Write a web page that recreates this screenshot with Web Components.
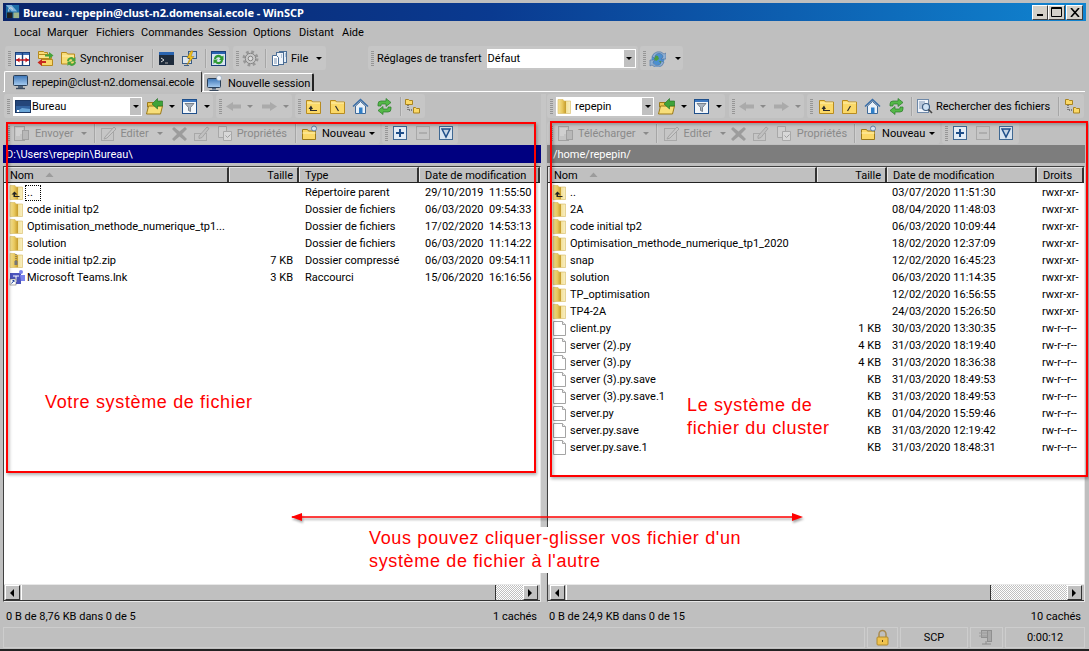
<!doctype html>
<html><head><meta charset="utf-8">
<style>
html,body{margin:0;padding:0;background:#c0c0c0;overflow:hidden}
</style></head><body>
<winscp-app></winscp-app>
<template id="app-t"><style>
:host{display:flex;flex-direction:column;width:1089px;height:651px;position:relative;overflow:hidden;background:#bfbfbf;font:11px/13px Roboto,"Noto Sans",sans-serif;color:#000;box-sizing:border-box;padding-left:3px}
.title{height:18px;margin-top:3px;background:linear-gradient(90deg,#0a246a 0%,#0a3a90 45%,#1084d0 100%);display:flex;align-items:center;color:#fff;margin-right:3px;padding-left:2px}
.title b{margin-left:2px;font:700 11px/13px "Noto Sans",sans-serif;white-space:nowrap;flex:1;letter-spacing:-.05px}
.wb{width:16px;height:15px;background:#d4d0c8;border:1px solid;border-color:#fff #404040 #404040 #fff;box-sizing:border-box;display:flex;align-items:center;justify-content:center}
.wbs{display:flex;margin-right:3px}
.menu{height:23px;display:flex;align-items:center;padding-left:11px}
.menu span{white-space:nowrap;flex:none}
.tb1{height:27px;box-sizing:border-box;display:flex;align-items:flex-start;padding-top:2px}
.tabs{height:21px;display:flex;align-items:flex-end;border-bottom:1px solid #fff;box-sizing:border-box;margin-right:4px}
.tab{display:flex;align-items:center;box-sizing:border-box;background:#c0c0c0;white-space:nowrap}
.tab.a{height:21px;width:198px;gap:3px;border-top:1px solid #fff;border-left:1px solid #fff;border-right:1px solid #333;padding-left:7px;margin-left:1px;margin-bottom:-1px;border-radius:2px 2px 0 0;position:relative;letter-spacing:-.12px}
.tab.i{height:18px;width:111px;gap:5px;border-top:1px solid #fff;border-right:2px solid #222;border-left:1px solid #fff;padding:2px 0 0 2px;margin-left:1px;border-radius:2px 2px 0 0;letter-spacing:-.05px}
.panes{flex:1;display:flex;min-height:0}
.split{width:6px;flex:none;box-sizing:border-box;padding:2px 1px 0 0}
.split i{display:block;height:100%;background:#c6c6c6}
.stat1{height:25px;display:flex;box-sizing:border-box;padding-top:3px}
.stat1 div{display:flex;justify-content:space-between;align-items:center;box-sizing:border-box;white-space:nowrap}
.stat2{height:21px;display:flex;margin-right:4px;gap:2px;margin-bottom:3px}
.stat2 div{border:1px solid #cdcdcd;box-sizing:border-box;display:flex;align-items:center;justify-content:center}
.bottom{position:absolute;left:0;right:0;bottom:0;height:2px;background:#222}
</style>
<div class="title"><win-ic name="app" size="16"></win-ic><b>Bureau - repepin@clust-n2.domensai.ecole - WinSCP</b>
<div class="wbs"><div class="wb"><svg width="8" height="8"><path d="M1 6h6v2H1z" fill="#000"/></svg></div><div class="wb" style="width:17px"><svg width="11" height="10"><path d="M0.500 0.500h10v9h-10zM0.500 1.500h10" fill="none" stroke="#000"/></svg></div><div class="wb" style="margin-left:1px;width:17px"><svg width="10" height="9"><path d="M1 0l8 9M9 0l-8 9" stroke="#000" stroke-width="1.600"/></svg></div></div></div>
<div class="menu"><span style="width:33px">Local</span><span style="width:49px">Marquer</span><span style="width:45px">Fichiers</span><span style="width:67px">Commandes</span><span style="width:45px">Session</span><span style="width:46px">Options</span><span style="width:43px">Distant</span><span>Aide</span></div>
<div class="tb1">
<win-band style="margin-left:2px;width:224px"><win-ic name="compare"></win-ic><win-ic name="foldsync" style="margin-left:6px"></win-ic><win-ic name="foldsync2" style="margin-left:6px"></win-ic><span style="margin-left:3px">Synchroniser</span><win-sep style="margin-left:8px"></win-sep><win-ic name="term" style="margin-left:4px"></win-ic><win-ic name="bolt" style="margin-left:6px"></win-ic><win-sep style="margin-left:7px"></win-sep><win-ic name="refreshbox" style="margin-left:3px"></win-ic></win-band>
<win-band style="margin-left:4px;width:93px"><win-ic name="gear"></win-ic><win-sep style="margin-left:6px"></win-sep><win-ic name="props" style="margin-left:4px"></win-ic><span style="margin-left:3px">File</span><win-caret style="margin-left:8px"></win-caret></win-band>
<win-band style="margin-left:42px;width:270px"><span>Réglages de transfert</span><win-combo style="width:149px;margin-left:5px" text="Défaut"></win-combo></win-band>
<win-band style="margin-left:2px;width:43px"><win-ic name="globe"></win-ic><win-caret style="margin-left:9px"></win-caret></win-band>
</div>
<div class="tabs"><div class="tab a"><win-ic name="monitor"></win-ic><span>repepin@clust-n2.domensai.ecole</span></div><div class="tab i"><win-ic name="monitor2"></win-ic><span>Nouvelle session</span></div></div>
<div class="panes">
<win-pane id="L" style="width:538px"></win-pane>
<div class="split"><i></i></div>
<win-pane id="R" style="width:538px"></win-pane>
</div>
<div class="stat1"><div style="width:538px;padding:0 4px 0 3px">0 B de 8,76 KB dans 0 de 5<span>1 cachés</span></div><div style="width:538px;padding:0 4px 0 2px;margin-left:6px">0 B de 24,9 KB dans 0 de 15<span>10 cachés</span></div></div>
<div class="stat2"><div style="flex:1"></div><div style="width:31px"><win-ic name="lock"></win-ic></div><div style="width:68px">SCP</div><div style="width:33px"><win-ic name="net"></win-ic></div><div style="width:80px">0:00:12</div></div>
<div class="bottom"></div>
<win-note style="left:6px;top:122px;width:530px;height:351px"></win-note>
<win-note style="left:550px;top:121px;width:538px;height:356px"></win-note>
<win-label style="left:45px;top:391px">Votre système de fichier</win-label>
<win-label style="left:687px;top:394px;width:170px">Le système de fichier du cluster</win-label>
<win-label style="left:369px;top:527px;width:385px;height:46px;background:#fff">Vous pouvez cliquer-glisser vos fichier d'un système de fichier à l'autre</win-label>
<svg style="position:absolute;left:286px;top:510px;filter:drop-shadow(1px 2px 1px rgba(0,0,0,.35))" width="522" height="16"><path d="M6 7H512" stroke="#f00" stroke-width="1.400"/><path d="M5 7l11-4v8zM517 7l-11-4v8z" fill="#f00"/></svg>
</template>

<template id="pane-t"><style>
:host{display:flex;flex-direction:column;flex:none;box-sizing:border-box;min-width:0}
.tb{height:24px;display:flex;align-items:center;margin-top:2px}
.tb2{height:22px;display:flex;align-items:center;margin-top:4px;color:#8a8a8a}
.path{height:18px;margin-top:1px;display:flex;align-items:center;color:#fff;box-sizing:border-box;white-space:nowrap;flex:none;padding-top:1px}
.list{flex:1;min-height:0;margin-top:3px;display:flex;flex-direction:column;background:#fff;border:1px solid;border-color:#404040 #e8e8e8 #e8e8e8 #404040;position:relative;overflow:hidden}
.hdr{height:16px;flex:none;display:flex;background:#c0c0c0;border-bottom:1px solid #222;box-sizing:border-box}
.hdr span{box-sizing:border-box;border-top:1px solid #e6e6e6;border-left:1px solid #e6e6e6;border-right:2px solid #333;padding:0 5px;white-space:nowrap;overflow:hidden;flex:none;line-height:15px}
.hdr .r{text-align:right;padding-right:4px}
.rows{flex:1;min-height:0;overflow:hidden;padding-top:1px}
.sb{height:17px;flex:none;display:flex;background:#c0c0c0;border-top:1px solid #e8e8e8;border-bottom:1px solid #333;box-sizing:border-box}
.btn{width:15px;height:15px;flex:none;box-sizing:border-box;border:1px solid;border-color:#fff #333 #333 #fff;display:flex;align-items:center;justify-content:center;background:#c0c0c0}
.thumb{box-sizing:border-box;border-right:1px solid #333;border-left:1px solid #fff;flex:none}
.track{flex:1;background:repeating-conic-gradient(#fff 0 25%,#c0c0c0 0 50%) 0 0/2px 2px}
</style>
<div class="tb" id="tb"></div>
<div class="tb2" id="tb2"></div>
<div class="path" id="path"></div>
<div class="list"><div class="hdr" id="hdr"></div><div class="rows" id="rows"></div>
<div class="sb" id="sb"></div></div>
</template>

<script>
const FG=`<defs><linearGradient id="fg"><stop offset="0" stop-color="#f6e496"/><stop offset=".35" stop-color="#e8c75c"/><stop offset=".62" stop-color="#c79e2e"/><stop offset=".68" stop-color="#f3e29c"/><stop offset="1" stop-color="#f9efc4"/></linearGradient></defs><path d="M1 1.500h5L7 3h6.500v12.500H1z" fill="url(#fg)" stroke="#d6bb62" stroke-width=".6"/>`;
const ICONS={
app:`<rect x="1" y="1" width="14" height="14" fill="#1d6ea8"/><path d="M1 1h6l6 7H7z" fill="#7fb4dc"/><path d="M2 9h6v6H2z" fill="#222"/><path d="M9 9h6v6H9z" fill="#9db58a"/><path d="M4 8v-2a2 2 0 0 1 4 0" fill="none" stroke="#ddd"/>`,
compare:`<rect x="1.500" y="2.500" width="14" height="13" fill="#fff" stroke="#1a3f7a"/><rect x="2" y="3" width="13" height="2" fill="#3f70b4"/><path d="M8.500 3v12" stroke="#1a3f7a" stroke-width="1.400"/><path d="M2 10h13" stroke="#c0141c" stroke-width="1.500"/><path d="M5.500 7.500L2.500 10l3 2.500zM11.500 7.500l3 2.500-3 2.500z" fill="#c0141c"/>`,
foldsync:`<path d="M1.500 1.500h5l1 1h3v4h-9z" fill="#f8dc76" stroke="#b68a1e"/><path d="M1.500 4.500h13v4h-13z" fill="#fce489" stroke="#b68a1e"/><path d="M4.500 9.500h11v6h-11z" fill="#f8d76c" stroke="#b68a1e"/><path d="M8 4.500h4V2l4.500 3.500L12 9V6.500H8z" fill="#46a33d"/><path d="M9 11H5V9l-4.500 3.500L5 16v-3h4z" fill="#c8281e"/>`,
foldsync2:`<path d="M1.500 2.500h5l1 1.500h7v10h-13z" fill="#f8dc76" stroke="#b68a1e"/><path d="M2 6h12" stroke="#fff1b0"/><path d="M7 11a4 4 0 0 1 7-2.500l1.500-1.500v4.500H11l1.500-1.500A2 2 0 0 0 9 11z" fill="#46a33d"/><path d="M16 12a4 4 0 0 1-7 2.500L7.500 16v-4.500H12L10.500 13a2 2 0 0 0 3.500-1z" fill="#46a33d"/>`,
term:`<rect x="1" y="2" width="15" height="13" fill="#1e2b3c"/><rect x="1" y="2" width="15" height="3" fill="#2a64b0"/><path d="M3 8l3 2-3 2" fill="none" stroke="#ddd"/><path d="M7 13h3" stroke="#aaa"/>`,
bolt:`<rect x="1.500" y="6.500" width="9" height="7" fill="#dde6ef" stroke="#3a5c86"/><rect x="7.500" y="1.500" width="8" height="7" fill="#bcd0e6" stroke="#3a5c86"/><path d="M10 1L6 8h3l-3 7 7-8.500h-3l2-5.500z" fill="#f2c21c" stroke="#a8780c" stroke-width=".5"/><path d="M3 15.500h5" stroke="#3a5c86"/>`,
refreshbox:`<rect x="1.500" y="1.500" width="14" height="14" fill="#d8e4f2" stroke="#1a3f7a"/><rect x="2" y="2" width="13" height="2" fill="#2a64b0"/><path d="M4 9a4.500 4.500 0 0 1 8-2.500l1.500-1V10H9l1.500-1.500A2.500 2.500 0 0 0 6 9z" fill="#2f9a33"/><path d="M13 10a4.500 4.500 0 0 1-8 2.500L3.500 14V9.500H8L6.500 11a2.500 2.500 0 0 0 4.500-1z" fill="#2f9a33"/>`,
gear:`<circle cx="8.500" cy="8.500" r="6.500" fill="none" stroke="#989898" stroke-width="3" stroke-dasharray="2.600 2.500"/><circle cx="8.500" cy="8.500" r="5.200" fill="#c8c8c8" stroke="#868686"/><circle cx="8.500" cy="8.500" r="2.300" fill="#dcdcdc" stroke="#868686"/>`,
props:`<rect x="8.500" y="1.500" width="7" height="11" fill="#e4edf7" stroke="#4b6e96"/><rect x="5.500" y="2.500" width="7" height="12" fill="#eef3f9" stroke="#4b6e96"/><path d="M1.500 5.500h4l2 2v8h-6z" fill="#fff" stroke="#4b6e96"/><path d="M3 9h3M3 11h3M3 13h3M10 5h1M10 7h1M14 4h1M14 6h1" stroke="#7a94b4"/>`,
globe:`<circle cx="9" cy="9" r="6.500" fill="#4c8fd0"/><path d="M5 5l4 1 1 3-3 2-2-2zM10 11l3 0-1 3z" fill="#4d9e3f"/><path d="M3 7a7 7 0 0 1 12-3l2-1v6h-5l2-2a4 4 0 0 0-8 1z" fill="#8fb0d4" stroke="#4a6f9c" stroke-width=".6"/><path d="M15 12a7 7 0 0 1-12 3l-2 1v-6h5l-2 2a4 4 0 0 0 8-1z" fill="#8fb0d4" stroke="#4a6f9c" stroke-width=".6"/>`,
monitor:`<defs><linearGradient id="m" x2="0" y2="1"><stop offset="0" stop-color="#3c76b8"/><stop offset="1" stop-color="#a9cdf0"/></linearGradient></defs><rect x="1.500" y="1.500" width="14" height="10" rx="1" fill="url(#m)" stroke="#2a3f58"/><path d="M6 12h5v2H6z" fill="#50657e"/><path d="M4 14.500h9" stroke="#3a4a5e" stroke-width="1.400"/>`,
monitor2:`<defs><linearGradient id="m2" x2="0" y2="1"><stop offset="0" stop-color="#3c76b8"/><stop offset="1" stop-color="#a9cdf0"/></linearGradient></defs><rect x="1.500" y="3.500" width="13" height="9" rx="1" fill="url(#m2)" stroke="#2a3f58"/><path d="M6 13h4v1.500H6z" fill="#50657e"/><path d="M3.500 15.500h9" stroke="#3a4a5e"/><circle cx="13" cy="3" r="2.500" fill="#f4f6fa" stroke="#8aa2be" stroke-width=".6"/>`,
desk:`<rect x="1.500" y="2.500" width="15" height="12" fill="#33639f" stroke="#1b3763"/><rect x="2" y="3" width="14" height="5" fill="#24467a"/><path d="M2 14l6-4 8 1v3z" fill="#6aa6d8"/><path d="M3 12h2v2H3z" fill="#fff"/>`,
foldopen:`<path d="M1.500 4.500h6l1 1.500h5v3h-12z" fill="#e9c650" stroke="#9b7a1a"/><path d="M.5 16l2-8h14l-2 8z" fill="#f7de7a" stroke="#9b7a1a"/><path d="M6 6l5.500-5.500v2.500h5v5h-5V11z" fill="#3fa33a" stroke="#1f6d1f" stroke-width=".6"/>`,
filter:`<rect x="1.500" y="1.500" width="14" height="14" fill="#f2f6fa" stroke="#1f4f8a"/><rect x="2" y="2" width="13" height="2" fill="#3d78c0"/><path d="M4 5.500h9L9.500 9.500v4l-2-1V9.500z" fill="#a9b4c0" stroke="#56606c" stroke-width=".7"/>`,
up:`<path d="M1.500 2.500h5l1 1.500h8v11.500H1.500z" fill="#fbd968" stroke="#b88c20"/><path d="M2 5h13" stroke="#fff1b0"/><path d="M6 7.500L3.500 11H5v2h7v-1H6.500v-1H8z" fill="#2c2c2c"/>`,
root:`<path d="M1.500 2.500h5l1 1.500h8v11.500H1.500z" fill="#fbd968" stroke="#b88c20"/><path d="M2 5h13" stroke="#fff1b0"/><path d="M6.500 8l3 5" stroke="#2c2c2c" stroke-width="1.200"/>`,
rootd:`<path d="M1.500 2.500h5l1 1.500h8v11.500H1.500z" fill="#fbd968" stroke="#b88c20"/><path d="M2 5h13" stroke="#fff1b0"/><path d="M9.500 8l-3 5" stroke="#2c2c2c" stroke-width="1.200"/>`,
home:`<path d="M1 8.500L8.500 1.500 16 8.500" fill="none" stroke="#3a6ea8" stroke-width="1.600"/><path d="M3.500 8L8.500 3.500 13.500 8v7.500h-10z" fill="#eaf1f8" stroke="#3f6a99"/><rect x="7" y="9.500" width="3.500" height="6" fill="#2f7fc8"/>`,
refresh:`<path d="M2 8V6q0-3 3-3h5V.5l5 4-5 4V6H6q-1 0-1 1v1z" fill="#54b848" stroke="#2a7a2a" stroke-width=".7"/><path d="M15 9v2q0 3-3 3H7v2.500l-5-4 5-4V11h4q1 0 1-1V9z" fill="#54b848" stroke="#2a7a2a" stroke-width=".7"/>`,
tree:`<path d="M1.500 1.500h3l1 1h3v4h-7z" fill="#fbd968" stroke="#a98420"/><path d="M9.500 9.500h2l1 1h3v4.500h-6z" fill="#fbd968" stroke="#a98420"/><path d="M4 7v5h5" fill="none" stroke="#333" stroke-dasharray="1 1"/>`,
find:`<rect x="1.500" y="1.500" width="11" height="13" fill="#f0f4fa" stroke="#6d88a8"/><path d="M3 4h6M3 6h4M3 8h4M3 10h4" stroke="#7a94b4"/><circle cx="10" cy="9" r="3.500" fill="#cfe2f4" stroke="#3f5e82" stroke-width="1.200"/><path d="M12.500 11.500L16 15" stroke="#444" stroke-width="1.600"/>`,
back:`<path d="M1 8.500l7-4.500v2.500h8v4H8V13z" fill="#aaa"/>`,
fwd:`<path d="M16 8.500L9 4v2.500H1v4h8V13z" fill="#aaa"/>`,
send:`<rect x="1.500" y="1.500" width="10" height="14" fill="#c4c4c4" stroke="#a0a0a0"/><path d="M3 4h7M3 6h7M3 8h7M3 10h4" stroke="#dcdcdc"/><rect x="9.500" y="5.500" width="6" height="9" fill="#b8b8b8" stroke="#a0a0a0"/>`,
edit:`<rect x="1.500" y="3.500" width="12" height="12" fill="none" stroke="#a8a8a8"/><path d="M5 12l9-10 2 2-9 9-3 1z" fill="#c8c8c8" stroke="#a4a4a4"/>`,
del:`<path d="M3 2l5.500 4.500L14 2l2 2-5 5 5 5-2 2-5.500-4.500L3 16l-2-2 5-5-5-5z" fill="#9c9c9c"/>`,
rename:`<rect x="1.500" y="8.500" width="12" height="7" fill="none" stroke="#a8a8a8"/><path d="M6 11l8-9 2 1.500-7 9-3 1z" fill="#c0c0c0" stroke="#a4a4a4"/>`,
prop:`<path d="M1.500 1.500h8v11h-8z" fill="#cfcfcf" stroke="#a8a8a8"/><path d="M6.500 6.500h8v9h-8z" fill="#d8d8d8" stroke="#a8a8a8"/><path d="M8.500 10.500l2 2 3-3" fill="none" stroke="#a0a0a0"/>`,
newf:`<path d="M1.500 4.500h5l1 1.500h7v8.500h-13z" fill="#fbd968" stroke="#9b7a1a"/><path d="M1.500 8h13" stroke="#fff1b0"/><circle cx="13" cy="3.500" r="2.500" fill="#dbe6f2" stroke="#5f7fa6"/>`,
plus:`<rect x="1.500" y="1.500" width="13" height="13" fill="#e4edf6" stroke="#3f6892"/><path d="M4 8h8M8 4v8" stroke="#1f4f8a" stroke-width="2"/>`,
minus:`<rect x="1.500" y="1.500" width="13" height="13" fill="none" stroke="#a8a8a8"/><path d="M4 8h8" stroke="#a4a4a4" stroke-width="1.500"/>`,
inv:`<rect x="1.500" y="1.500" width="13" height="13" fill="#d8e4f0" stroke="#3f6892"/><path d="M4 4h8L8 12z" fill="#c4d4e4" stroke="#1f4f8a" stroke-width="1.500"/>`,
folder:FG,
parent:FG+`<path d="M5.500 7.500L2.500 10.500h2V13h6v-1H6v-1.500h2.500z" fill="#222"/>`,
zip:FG+`<path d="M7 2v7" stroke="#555" stroke-dasharray="1 1"/><rect x="5.500" y="9" width="3" height="4" fill="#777"/>`,
teams:`<rect x="1" y="4" width="11" height="11" fill="#4b53bc"/><path d="M4 7h6M7 7v6" stroke="#fff"/><circle cx="12" cy="3" r="2" fill="#7b83eb"/><path d="M11 6h5v6h-4z" fill="#7b83eb"/><rect x="1" y="10" width="6" height="6" fill="#fff" stroke="#555" stroke-width=".5"/><path d="M2.500 14.500l2.500-3M3.500 11.500H5V13" stroke="#1a3f9a" fill="none"/>`,
file:`<path d="M1.500 1.500h9l3 3v11h-12z" fill="#fff" stroke="#a4a4a4"/><path d="M10.500 1.500v3h3" fill="#eee" stroke="#a4a4a4"/>`,
lock:`<path d="M5 8V5a3.500 3.500 0 0 1 7 0v3" fill="none" stroke="#a88b52" stroke-width="1.500"/><rect x="3" y="8" width="11" height="8" rx="1" fill="#efc24e" stroke="#b08a2c"/><rect x="8" y="11" width="1" height="2" fill="#5a4410"/>`,
net:`<rect x="3.500" y="1.500" width="8" height="7" fill="#b0b0b0" stroke="#909090"/><rect x="9.500" y="1.500" width="4" height="11" fill="#a8a8a8" stroke="#909090"/><path d="M1 4h8M1 7h8" stroke="#9c9c9c"/><path d="M8 12v3M4 15h9" stroke="#8c8c8c"/>`
};
class Base extends HTMLElement{shadow(html){const s=this.attachShadow({mode:'open'});s.innerHTML=html;return s}}
customElements.define('win-ic',class extends Base{connectedCallback(){if(this.shadowRoot)return;const n=this.getAttribute('name'),z=this.getAttribute('size')||17;
 this.shadow(`<style>:host{display:inline-flex;flex:none;width:${z}px;height:${z}px}svg{display:block}</style><svg width="${z}" height="${z}" viewBox="0 0 17 17">${ICONS[n]||''}</svg>`)}});
customElements.define('win-band',class extends Base{connectedCallback(){if(this.shadowRoot)return;
 this.shadow(`<style>:host{display:flex;flex:none;align-items:center;height:100%;min-height:22px;max-height:24px;box-sizing:border-box;background:#c6c6c6;border-radius:3px;padding-left:3px;white-space:nowrap}
 .g{width:3px;height:15px;flex:none;margin-right:3px;background:repeating-linear-gradient(#969696 0 1px,transparent 1px 2px)}</style><div class="g"></div><slot></slot>`)}});
customElements.define('win-sep',class extends Base{connectedCallback(){if(this.shadowRoot)return;
 this.shadow(`<style>:host{display:block;flex:none;width:1px;height:19px;background:#a6a6a6;border-right:1px solid #cfcfcf}</style>`)}});
customElements.define('win-caret',class extends Base{connectedCallback(){if(this.shadowRoot)return;
 const c=this.getAttribute('color')||'#000';
 this.shadow(`<style>:host{display:block;flex:none;width:0;height:0;border:3px solid transparent;border-top:3px solid ${c};border-bottom:0}</style>`)}});
customElements.define('win-combo',class extends Base{connectedCallback(){if(this.shadowRoot)return;
 const t=this.getAttribute('text'),ic=this.getAttribute('icon');
 this.shadow(`<style>:host{display:flex;flex:none;height:19px;box-sizing:border-box;background:#fff;align-items:center;white-space:nowrap;color:#000}
 .t{flex:1;padding-left:1px;display:flex;align-items:center;gap:1px;min-width:0}.b{width:11px;height:17px;margin-right:1px;background:#c0c0c0;display:flex;align-items:center;justify-content:center}
 .c{width:0;height:0;border:3px solid transparent;border-top:3px solid #000;border-bottom:0}</style><div class="t">${ic?`<win-ic name="${ic}"></win-ic>`:''}<span>${t}</span></div><div class="b"><div class="c"></div></div>`)}});
customElements.define('win-note',class extends Base{connectedCallback(){if(this.shadowRoot)return;
 this.shadow(`<style>:host{position:absolute;box-sizing:border-box;border:2px solid #f00;box-shadow:1px 2px 3px rgba(0,0,0,.3),inset 2px 2px 3px rgba(0,0,0,.22)}</style>`)}});
customElements.define('win-label',class extends Base{connectedCallback(){if(this.shadowRoot)return;
 this.shadow(`<style>:host{position:absolute;display:block;color:#f00;font:18px/22.500px "Liberation Sans",Arial,sans-serif;letter-spacing:.65px}</style><slot></slot>`)}});

const I=(n,m)=>`<win-ic name="${n}"${m?` style="margin-left:${m}px"`:''}></win-ic>`;
const GC=m=>`<win-caret color="#8a8a8a" style="margin-left:${m}px"></win-caret>`;
const BC=m=>`<win-caret style="margin-left:${m}px"></win-caret>`;
const S=m=>`<win-sep style="margin-left:${m}px"></win-sep>`;
const T=(t,m,x='')=>`<span style="margin-left:${m}px;${x}">${t}</span>`;
const LEFT=[['parent','..','','Répertoire parent','29/10/2019  11:55:50',1],['folder','code initial tp2','','Dossier de fichiers','06/03/2020  09:54:33'],['folder','Optimisation_methode_numerique_tp1...','','Dossier de fichiers','17/02/2020  14:53:13'],['folder','solution','','Dossier de fichiers','06/03/2020  11:14:22'],['zip','code initial tp2.zip','7 KB','Dossier compressé','06/03/2020  09:54:11'],['teams','Microsoft Teams.lnk','3 KB','Raccourci','15/06/2020  16:16:56']];
const D='rwxr-xr-',F='rw-r--r--';
const RIGHT=[['parent','..','','03/07/2020 11:51:30',D],['folder','2A','','08/04/2020 11:48:03',D],['folder','code initial tp2','','06/03/2020 10:09:44',D],['folder','Optimisation_methode_numerique_tp1_2020','','18/02/2020 12:37:09',D],['folder','snap','','12/02/2020 16:45:23',D],['folder','solution','','06/03/2020 11:14:35',D],['folder','TP_optimisation','','12/02/2020 16:56:55',D],['folder','TP4-2A','','24/03/2020 15:26:50',D],['file','client.py','1 KB','30/03/2020 13:30:35',F],['file','server (2).py','4 KB','31/03/2020 18:19:40',F],['file','server (3).py','4 KB','31/03/2020 18:36:38',F],['file','server (3).py.save','KB','31/03/2020 18:49:53',F],['file','server (3).py.save.1','KB','31/03/2020 18:49:53',F],['file','server.py','KB','01/04/2020 15:59:46',F],['file','server.py.save','KB','31/03/2020 12:19:42',F],['file','server.py.save.1','KB','31/03/2020 18:48:31',F]];
customElements.define('win-row',class extends Base{connectedCallback(){if(this.shadowRoot)return;
 const cols=JSON.parse(this.dataset.cols),w=JSON.parse(this.dataset.w),ic=this.dataset.ic,foc=this.dataset.focus,pl=this.dataset.pl,ni=this.dataset.ni;
 this.shadow(`<style>:host{display:flex;height:17px;align-items:center;white-space:pre}
 .c{flex:none;box-sizing:border-box;overflow:hidden;padding:0 0 0 ${pl}px}.r{text-align:right;padding:0 6px 0 0}.n{display:flex;align-items:center;padding:0 0 0 ${ni}px;gap:1px;overflow:visible}
 .f{outline:1px dotted #000;outline-offset:-1px;padding:0 2px;width:12px;margin-left:-2px;line-height:16px}</style>`+
 cols.map((t,i)=>i==0?`<div class="c n" style="width:${w[0]}px"><win-ic name="${ic}"></win-ic><span class="${foc?'f':''}">${t}</span></div>`:`<div class="c ${i==1?'r':''}" style="width:${w[i]}px">${t}</div>`).join(''))}});
customElements.define('win-pane',class extends Base{connectedCallback(){if(this.shadowRoot)return;
 const s=this.attachShadow({mode:'open'});s.appendChild(document.getElementById('pane-t').content.cloneNode(true));
 const L=this.id=='L',$=i=>s.getElementById(i);
 $('tb').innerHTML=L?
 `<win-band style="margin-left:1px;width:209px"><win-combo style="width:129px" icon="desk" text="Bureau"></win-combo>${I('foldopen',4)}${BC(6)}${I('filter',6)}${BC(6)}</win-band>
 <win-band style="margin-left:3px;width:76px">${I('back')}${GC(5)}${I('fwd',8)}${GC(5)}</win-band>
 <win-band style="margin-left:3px;width:130px">${I('up',1)}${I('root',7)}${I('home',6)}${I('refresh',7)}${S(7)}${I('tree',2)}</win-band>`:
 `<win-band style="width:178px"><win-combo style="width:98px" icon="folder" text="repepin"></win-combo>${I('foldopen',4)}${BC(6)}${I('filter',6)}${BC(6)}</win-band>
 <win-band style="margin-left:4px;width:75px">${I('back')}${GC(5)}${I('fwd',7)}${GC(5)}</win-band>
 <win-band style="margin-left:3px;width:277px">${I('up',2)}${I('rootd',6)}${I('home',6)}${I('refresh',7)}${S(6)}${I('find',3)}${T('Rechercher des fichiers',3,'color:#000')}${S(8)}${I('tree',4)}</win-band>`;
 $('tb2').innerHTML=L?
 `<win-band style="margin-left:1px;width:376px">${I('send')}${T('Envoyer',5)}${GC(8)}${S(7)}${I('edit',4)}${T('Editer',3)}${GC(8)}${I('del',8)}${I('rename',5)}${I('prop',7)}${T('Propriétés',3)}${S(8)}${I('newf',4)}${T('Nouveau',4,'color:#000')}${BC(4)}</win-band><win-band style="margin-left:2px;width:76px">${I('plus',1)}${I('minus',6)}${I('inv',6)}</win-band>`:
 `<win-band style="width:393px">${I('send',1)}${T('Télécharger',4)}${GC(7)}${S(7)}${I('edit',5)}${T('Editer',4)}${GC(8)}${I('del',4)}${I('rename',5)}${I('prop',7)}${T('Propriétés',4)}${S(7)}${I('newf',4)}${T('Nouveau',5,'color:#000')}${BC(4)}</win-band><win-band style="margin-left:2px;width:77px">${I('plus',1)}${I('minus',6)}${I('inv',6)}</win-band>`;
 const p=$('path');p.textContent=L?'D:\\Users\\repepin\\Bureau\\':'/home/repepin/';p.style.background=L?'#000080':'#7d7d7d';p.style.paddingLeft=L?'3px':'6px';
 const hd=L?[['Nom',225],['Taille',70,1],['Type',120],['Date de modification',121]]:[['Nom',269],['Taille',70,1],['Date de modification',150],['Droits',47]];
 $('hdr').innerHTML=hd.map((h,i)=>`<span class="${h[2]?'r':''}" style="width:${h[1]}px">${h[0]}${i==0?'<svg width="9" height="5" style="margin-left:11px;vertical-align:2px"><path d="M0.500 5L4.500 .5 8.500 5z" fill="#9c9c9c"/></svg>':''}</span>`).join('');
 const w=hd.map(h=>h[1]);
 (L?LEFT:RIGHT).forEach(r=>{const e=document.createElement('win-row');
  e.dataset.cols=JSON.stringify(r.slice(1,5));e.dataset.w=JSON.stringify(w);e.dataset.ic=r[0];e.dataset.pl=L?6:5;e.dataset.ni=L?5:4;if(L&&r[5])e.dataset.focus=1;$('rows').appendChild(e)});
 $('sb').innerHTML=`<div class="btn" style="margin-left:${L?1:2}px"><svg width="5" height="8"><path d="M4 0v8L0 4z"/></svg></div><div class="thumb" style="width:${L?475:425}px;margin-left:1px"></div><div class="track"></div><div class="btn" style="margin-right:2px"><svg width="5" height="8"><path d="M0 0v8l4-4z"/></svg></div>`;
 }});
customElements.define('winscp-app',class extends Base{constructor(){super();this.attachShadow({mode:'open'}).appendChild(document.getElementById('app-t').content.cloneNode(true))}});
</script>
</body></html>
